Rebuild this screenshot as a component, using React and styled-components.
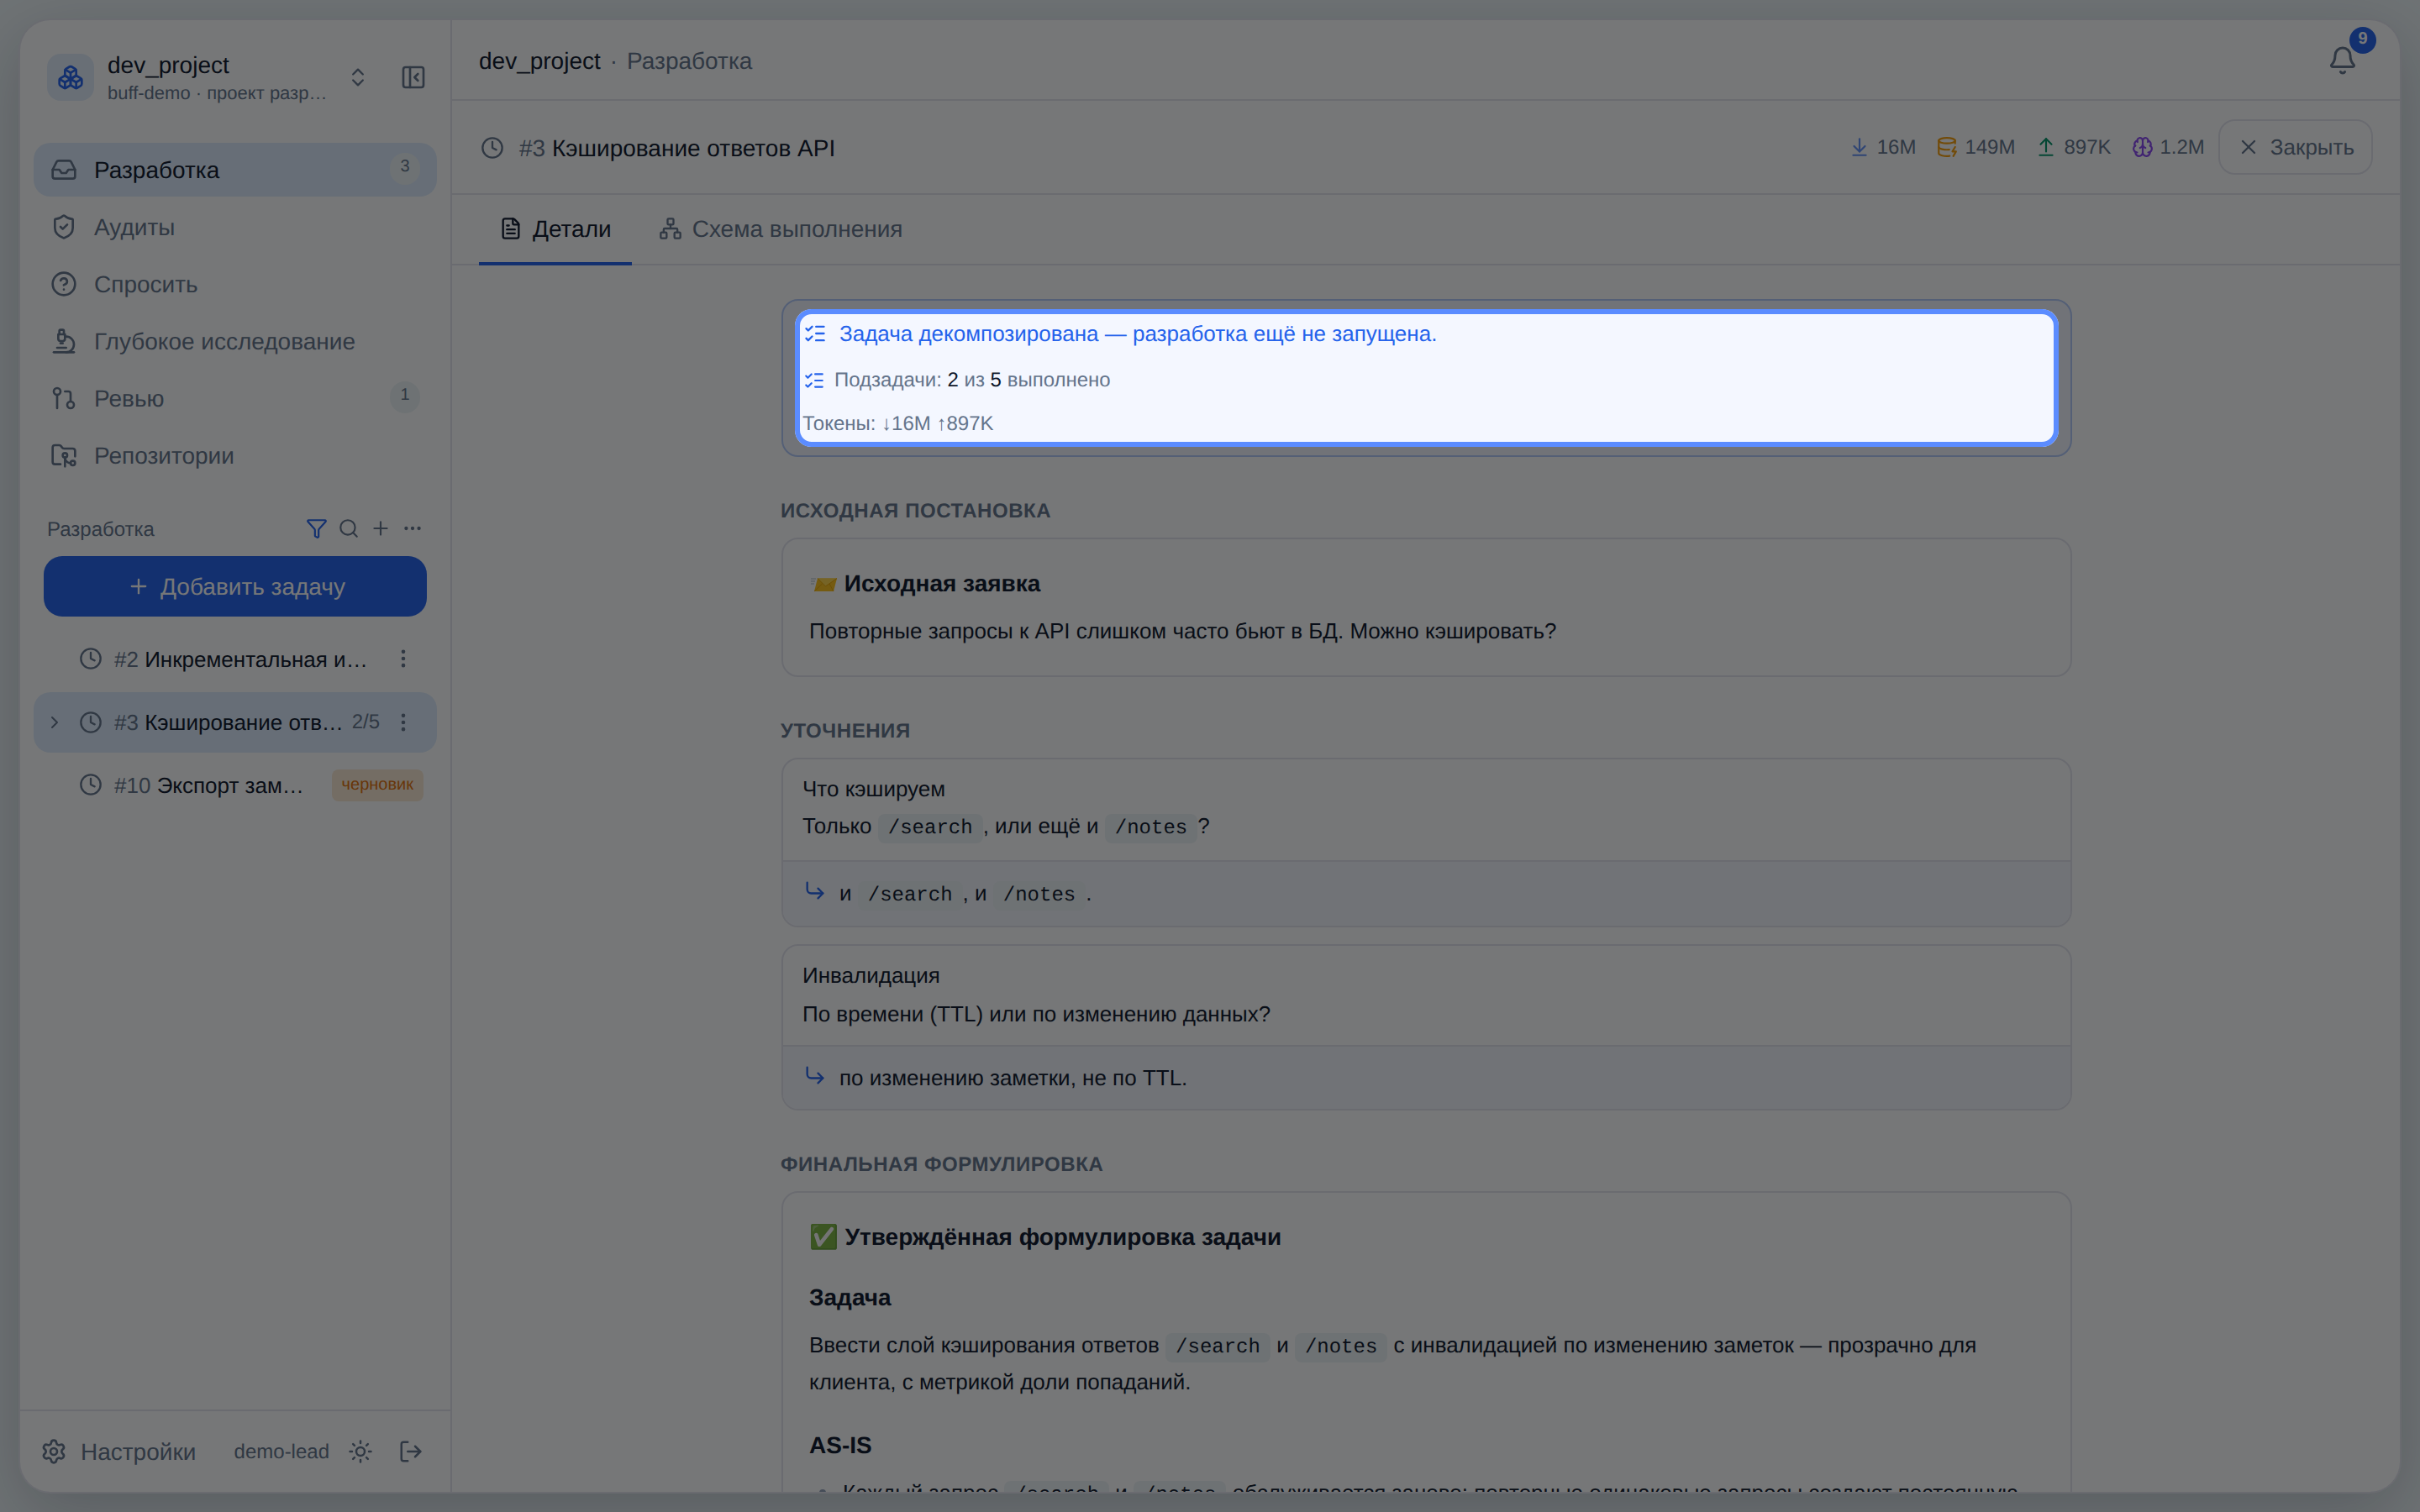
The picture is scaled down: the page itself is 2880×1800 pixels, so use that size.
import React from "react";
import styled, { createGlobalStyle } from "styled-components";
import {
	ArrowDownToLine,
	ArrowUpFromLine,
	Bell,
	Boxes,
	Brain,
	ChevronRight,
	ChevronsUpDown,
	CircleHelp,
	Clock,
	CornerDownRight,
	DatabaseZap,
	Ellipsis,
	EllipsisVertical,
	FileText,
	FolderGit2,
	Funnel,
	GitPullRequest,
	Inbox,
	ListChecks,
	LogOut,
	Microscope,
	Network,
	PanelLeftClose,
	Plus,
	Search,
	Settings,
	ShieldCheck,
	Sun,
	X,
} from "lucide-react";

const navItems = [
	{ label: "Разработка", icon: Inbox, count: 3, active: true },
	{ label: "Аудиты", icon: ShieldCheck },
	{ label: "Спросить", icon: CircleHelp },
	{ label: "Глубокое исследование", icon: Microscope },
	{ label: "Ревью", icon: GitPullRequest, count: 1 },
	{ label: "Репозитории", icon: FolderGit2 },
];

const tasks = [
	{ id: "#2", title: "Инкрементальная индексация", menu: true },
	{ id: "#3", title: "Кэширование ответов API", progress: "2/5", menu: true, active: true },
	{ id: "#10", title: "Экспорт заметок в PDF", draft: true },
];

const tokens = [
	{ value: "16M", icon: ArrowDownToLine, color: "#6390f5" },
	{ value: "149M", icon: DatabaseZap, color: "#f59e0b" },
	{ value: "897K", icon: ArrowUpFromLine, color: "#059669" },
	{ value: "1.2M", icon: Brain, color: "#8b48f0" },
];

const Envelope = () => {
	return (
		<EnvelopeSvg width="34" height="18" viewBox="0 0 34 18">
			<path d="M2 2h6M2 5h5M2 8h4" stroke="#b0bec5" strokeWidth="1.2" />
			<path d="M10 1.5h23L29 17H6z" fill="#fcc21b" />
			<path d="M10 1.5h23L19.5 11z" fill="#ffd54a" />
			<path d="M10 1.5 19.5 11 33 1.5M6 17l9.5-9M29 17l-5-9" fill="none" stroke="#e5a000" strokeWidth="0.9" />
		</EnvelopeSvg>
	);
};

const Sidebar = () => {
	return (
		<Side>
			<Project>
				<Logo>
					<Boxes size={32} />
				</Logo>
				<ProjectText>
					<ProjectName>dev_project</ProjectName>
					<ProjectInfo>buff-demo · проект разработки</ProjectInfo>
				</ProjectText>
				<ChevronsUpDown size={28} />
				<Collapse>
					<PanelLeftClose size={32} />
				</Collapse>
			</Project>
			<Nav>
				{navItems.map(({ label, icon: Icon, count, active }) => (
					<NavItem key={label} $active={active}>
						<Icon size={32} />
						<p>{label}</p>
						{count && <Count>{count}</Count>}
					</NavItem>
				))}
			</Nav>
			<ListHead>
				<p>Разработка</p>
				<FilterIcon size={26} />
				<Search size={26} />
				<Plus size={26} />
				<Ellipsis size={26} />
			</ListHead>
			<AddButton>
				<Plus size={28} />
				<p>Добавить задачу</p>
			</AddButton>
			<Tasks>
				{tasks.map((task) => (
					<Task key={task.id} $active={task.active} $draft={task.draft}>
						<Arrow>{task.active && <ChevronRight size={24} />}</Arrow>
						<Clock size={28} />
						<TaskTitle $active={task.active}>
							<span>{task.id}</span> {task.title}
						</TaskTitle>
						{task.progress && <Progress>{task.progress}</Progress>}
						{task.menu && (
							<TaskMenu>
								<EllipsisVertical size={28} />
							</TaskMenu>
						)}
						{task.draft && <Draft>черновик</Draft>}
					</Task>
				))}
			</Tasks>
			<SideFooter>
				<Settings size={32} />
				<SettingsText>Настройки</SettingsText>
				<User>demo-lead</User>
				<Sun size={30} />
				<LogOut size={30} />
			</SideFooter>
		</Side>
	);
};

const Header = () => {
	return (
		<>
			<TopBar>
				<Crumb>dev_project</Crumb>
				<Crumb $muted>·</Crumb>
				<Crumb $muted>Разработка</Crumb>
				<BellBox>
					<Bell size={36} />
					<BellCount>9</BellCount>
				</BellBox>
			</TopBar>
			<TaskBar>
				<TaskBarIcon>
					<Clock size={28} />
				</TaskBarIcon>
				<TaskBarTitle>
					<span>#3</span> Кэширование ответов API
				</TaskBarTitle>
				<TokenList>
					{tokens.map(({ value, icon: Icon, color }) => (
						<Token key={value} $color={color}>
							<Icon size={26} />
							<p>{value}</p>
						</Token>
					))}
				</TokenList>
				<CloseButton>
					<X size={28} />
					Закрыть
				</CloseButton>
			</TaskBar>
			<Tabs>
				<Tab $active>
					<FileText size={28} />
					<p>Детали</p>
				</Tab>
				<Tab>
					<Network size={28} />
					<p>Схема выполнения</p>
				</Tab>
			</Tabs>
		</>
	);
};

const Details = () => {
	return (
		<Content>
			<StatusCard>
				<StatusTitle>
					<ListChecks size={28} />
					Задача декомпозирована — разработка ещё не запущена.
				</StatusTitle>
				<StatusRow>
					<ListChecks size={26} />
					<p>
						Подзадачи: <b>2</b> из <b>5</b> выполнено
					</p>
				</StatusRow>
				<StatusRow $last>Токены: ↓16M ↑897K</StatusRow>
			</StatusCard>

			<SectionTitle>Исходная постановка</SectionTitle>
			<Card>
				<h3>
					<Envelope /> Исходная заявка
				</h3>
				<p>Повторные запросы к API слишком часто бьют в БД. Можно кэшировать?</p>
			</Card>

			<SectionTitle>Уточнения</SectionTitle>
			<Question>
				<Ask $code>
					<p>Что кэшируем</p>
					<p>
						Только <Code>/search</Code>, или ещё и <Code>/notes</Code>?
					</p>
				</Ask>
				<Answer $code>
					<CornerDownRight size={28} />
					<p>
						и <Code>/search</Code>, и <Code>/notes</Code>.
					</p>
				</Answer>
			</Question>
			<Question>
				<Ask>
					<p>Инвалидация</p>
					<p>По времени (TTL) или по изменению данных?</p>
				</Ask>
				<Answer>
					<CornerDownRight size={28} />
					<p>по изменению заметки, не по TTL.</p>
				</Answer>
			</Question>

			<SectionTitle>Финальная формулировка</SectionTitle>
			<Card>
				<h3>✅ Утверждённая формулировка задачи</h3>
				<h4>Задача</h4>
				<p>
					Ввести слой кэширования ответов <Code>/search</Code> и <Code>/notes</Code> с инвалидацией по
					изменению заметок — прозрачно для клиента, с метрикой доли попаданий.
				</p>
				<h4>AS-IS</h4>
				<Bullet>
					<p>
						Каждый запрос <Code>/search</Code> и <Code>/notes</Code> обслуживается заново: повторные
						одинаковые запросы создают постоянную
					</p>
				</Bullet>
			</Card>
		</Content>
	);
};

const App = () => {
	return (
		<>
			<GlobalStyle />
			<Page>
				<Window>
					<Sidebar />
					<Main>
						<Header />
						<Details />
					</Main>
				</Window>
			</Page>
			<Spotlight />
		</>
	);
};

export default App;

const GlobalStyle = createGlobalStyle`
	* {
		box-sizing: border-box;
		margin: 0;
		padding: 0;
	}
	body {
		font-family: "Liberation Sans", Arial, sans-serif;
		font-size: 28px;
		color: #0f172a;
		text-rendering: geometricPrecision;
		overflow: hidden;
	}
	svg {
		flex-shrink: 0;
	}
`;

const Page = styled.div`
	width: 100vw;
	height: 100vh;
	padding: 24px;
	background: #eef5f7;
`;

const Window = styled.div`
	width: 100%;
	height: 100%;
	display: flex;
	overflow: hidden;
	border-radius: 36px;
	background: #fff;
	box-shadow: 0 0 0 2px #e4e5ee, 0 24px 80px rgba(15, 23, 42, 0.22);
`;

const Side = styled.div`
	width: 514px;
	flex-shrink: 0;
	display: flex;
	flex-direction: column;
	border-right: 2px solid #e4e5ee;
	color: #64748b;
`;

const Project = styled.div`
	height: 56px;
	margin: 40px 28px 0 32px;
	display: flex;
	align-items: center;
`;

const Logo = styled.div`
	width: 56px;
	height: 56px;
	border-radius: 16px;
	display: flex;
	justify-content: center;
	align-items: center;
	background: #e3edfb;
	color: #2563eb;
`;

const ProjectText = styled.div`
	width: 263px;
	margin: 0 21px 0 16px;
	padding-top: 2px;
`;

const ProjectName = styled.p`
	line-height: 36px;
	color: #0f172a;
`;

const ProjectInfo = styled.p`
	font-size: 22px;
	line-height: 30px;
	overflow: hidden;
	white-space: nowrap;
	text-overflow: ellipsis;
`;

const Collapse = styled.div`
	display: flex;
	margin-left: auto;
`;

const Nav = styled.div`
	margin: 50px 16px 0;
	display: flex;
	flex-direction: column;
	gap: 4px;
`;

const NavItem = styled.div`
	height: 64px;
	padding: 0 20px;
	border-radius: 20px;
	display: flex;
	align-items: center;
	gap: 20px;
	background: ${({ $active }) => ($active ? "#deecfc" : "transparent")};
	p {
		padding-top: 2px;
		color: ${({ $active }) => ($active ? "#0f172a" : "inherit")};
	}
`;

const Count = styled.div`
	min-width: 36px;
	height: 38px;
	margin-left: auto;
	margin-top: -2px;
	padding-top: 5px;
	border-radius: 19px;
	background: #eef4f6;
	font-size: 20px;
	line-height: 22px;
	text-align: center;
`;

const ListHead = styled.div`
	height: 36px;
	margin: 37px 32px 0;
	display: flex;
	align-items: center;
	gap: 12px;
	p {
		flex: 1;
		padding-top: 3px;
		font-size: 24px;
	}
`;

const FilterIcon = styled(Funnel)`
	color: #2563eb;
`;

const AddButton = styled.div`
	height: 72px;
	margin: 15px 28px 0;
	padding-left: 2px;
	border-radius: 22px;
	display: flex;
	justify-content: center;
	align-items: center;
	gap: 12px;
	background: #2563eb;
	color: #fff;
	p {
		padding-top: 2px;
	}
`;

const Tasks = styled.div`
	margin: 14px 16px 0;
	display: flex;
	flex-direction: column;
	gap: 4px;
`;

const Task = styled.div`
	height: ${({ $draft }) => ($draft ? "68px" : "72px")};
	padding: 0 16px 0 10px;
	border-radius: 20px;
	display: flex;
	align-items: center;
	background: ${({ $active }) => ($active ? "#deecfc" : "transparent")};
`;

const Arrow = styled.div`
	width: 44px;
	display: flex;
	padding-left: 3px;
`;

const TaskTitle = styled.p`
	flex: 1;
	min-width: 0;
	margin: 0 6px 0 14px;
	padding-top: ${({ $active }) => ($active ? "0" : "2px")};
	font-size: 26px;
	color: #0f172a;
	overflow: hidden;
	white-space: nowrap;
	text-overflow: ellipsis;
	span {
		color: #64748b;
	}
`;

const Progress = styled.p`
	font-size: 24px;
`;

const TaskMenu = styled.div`
	width: 48px;
	margin: 0 0 0 4px;
	display: flex;
	justify-content: center;
`;

const Draft = styled.div`
	height: 38px;
	margin: 1px 0 0 18px;
	padding: 0 12px;
	border-radius: 8px;
	background: #fbe9d2;
	color: #e0700a;
	font-size: 20px;
	line-height: 36px;
`;

const SideFooter = styled.div`
	height: 98px;
	margin-top: auto;
	padding: 0 32px 0 24px;
	border-top: 2px solid #e4e5ee;
	display: flex;
	align-items: center;
`;

const SettingsText = styled.p`
	margin-left: 16px;
	padding-top: 2px;
	flex: 1;
`;

const User = styled.p`
	font-size: 24px;
	padding-top: 2px;
	margin-right: 22px;
	& + svg {
		margin-right: 30px;
	}
`;

const Main = styled.div`
	flex: 1;
	min-width: 0;
	display: flex;
	flex-direction: column;
`;

const TopBar = styled.div`
	height: 96px;
	flex-shrink: 0;
	padding: 0 50px 0 32px;
	border-bottom: 2px solid #e4e5ee;
	display: flex;
	align-items: center;
	gap: 11px;
`;

const Crumb = styled.p`
	padding-top: 4px;
	color: ${({ $muted }) => ($muted ? "#64748b" : "#0f172a")};
`;

const BellBox = styled.div`
	position: relative;
	margin-left: auto;
	margin-top: 2px;
	display: flex;
	color: #64748b;
`;

const BellCount = styled.div`
	position: absolute;
	top: -22px;
	right: -22px;
	width: 32px;
	height: 32px;
	border-radius: 50%;
	background: #2563eb;
	color: #fff;
	font-size: 20px;
	font-weight: 700;
	line-height: 28px;
	text-align: center;
`;

const TaskBar = styled.div`
	height: 112px;
	flex-shrink: 0;
	padding: 0 32px;
	border-bottom: 2px solid #e4e5ee;
	display: flex;
	align-items: center;
	color: #64748b;
`;

const TaskBarIcon = styled.div`
	width: 32px;
	display: flex;
	justify-content: center;
	padding-top: 1px;
`;

const TaskBarTitle = styled.p`
	flex: 1;
	margin-left: 16px;
	padding-top: 3px;
	color: #0f172a;
	span {
		color: #64748b;
	}
`;

const TokenList = styled.div`
	display: flex;
	gap: 24px;
	margin-right: 16px;
`;

const Token = styled.div`
	display: flex;
	align-items: center;
	gap: 8px;
	font-size: 24px;
	p {
		padding-top: 2px;
	}
	svg {
		color: ${({ $color }) => $color};
	}
`;

const CloseButton = styled.div`
	height: 66px;
	padding: 0 20px;
	border: 2px solid #e4e5ee;
	border-radius: 20px;
	display: flex;
	align-items: center;
	gap: 12px;
	font-size: 26px;
`;

const Tabs = styled.div`
	height: 84px;
	flex-shrink: 0;
	padding: 0 32px;
	display: flex;
	gap: 8px;
	box-shadow: inset 0 -2px #e4e5ee;
`;

const Tab = styled.div`
	padding: 0 24px;
	display: flex;
	align-items: center;
	gap: 12px;
	border-bottom: 4px solid ${({ $active }) => ($active ? "#2563eb" : "transparent")};
	color: ${({ $active }) => ($active ? "#0f172a" : "#64748b")};
	p {
		padding-top: 2px;
	}
`;

const Content = styled.div`
	flex: 1;
	min-height: 0;
	width: 1538px;
	margin: 0 auto;
	padding: 40px 0 0 2px;
	overflow: hidden;
	font-size: 26px;
`;

const StatusCard = styled.div`
	height: 188px;
	padding: 18px 24px;
	border: 2px solid #b4cbfa;
	border-radius: 20px;
	background: #f4f7ff;
`;

const StatusTitle = styled.div`
	height: 42px;
	display: flex;
	align-items: center;
	gap: 15px;
	color: #2563eb;
`;

const StatusRow = styled.div`
	height: 38px;
	margin-top: ${({ $last }) => ($last ? "14px" : "16px")};
	margin-left: ${({ $last }) => ($last ? "-1px" : "0")};
	display: flex;
	align-items: center;
	gap: 11px;
	font-size: 24px;
	color: #64748b;
	svg {
		color: #2563eb;
	}
	b {
		font-weight: 400;
		color: #0f172a;
	}
`;

const SectionTitle = styled.h2`
	margin: 47px 0 13px -1px;
	font-size: 24px;
	line-height: 36px;
	letter-spacing: 0.56px;
	text-transform: uppercase;
	color: #64748b;
`;

const EnvelopeSvg = styled.svg`
	vertical-align: -1px;
`;

const Card = styled.div`
	padding: 30px 30px 31px 31px;
	border: 2px solid #e4e5ee;
	border-radius: 20px;
	line-height: 44.2px;
	h3,
	h4 {
		font-size: 28px;
		line-height: 44.8px;
		padding-top: 1px;
		margin-bottom: 11px;
	}
	h3 + h4 {
		margin-top: 26px;
	}
	p + h4 {
		margin-top: 31px;
	}
`;

const Code = styled.code`
	padding: 4px 12px;
	border-radius: 8px;
	background: #eef4f6;
	font-family: "Liberation Mono", monospace;
	font-size: 24px;
	line-height: 1;
`;

const Bullet = styled.div`
	display: flex;
	&::before {
		content: "";
		width: 8px;
		height: 8px;
		margin: 18px 20px 0 12px;
		flex-shrink: 0;
		border-radius: 50%;
		background: #94a3b8;
	}
`;

const Question = styled.div`
	border: 2px solid #e4e5ee;
	border-radius: 20px;
	overflow: hidden;
	line-height: 42px;
	& + & {
		margin-top: 20px;
	}
`;

const Ask = styled.div`
	height: ${({ $code }) => ($code ? "120px" : "118px")};
	padding: 14px 23px;
	p + p {
		margin-top: ${({ $code }) => ($code ? "2px" : "4px")};
	}
`;

const Answer = styled.div`
	height: ${({ $code }) => ($code ? "78px" : "76px")};
	padding: 16px 24px 0;
	border-top: 2px solid #e4e5ee;
	display: flex;
	gap: 15px;
	background: #f3f5fc;
	svg {
		margin-top: 4px;
		color: #2563eb;
	}
`;

// onboarding highlight, the huge shadow dims the rest of the page
const Spotlight = styled.div`
	position: fixed;
	top: 368px;
	left: 946px;
	width: 1504px;
	height: 164px;
	border: 6px solid #5b8cff;
	border-radius: 20px;
	box-shadow: 0 0 0 4000px rgba(5, 7, 10, 0.55);
	z-index: 10;
`;
